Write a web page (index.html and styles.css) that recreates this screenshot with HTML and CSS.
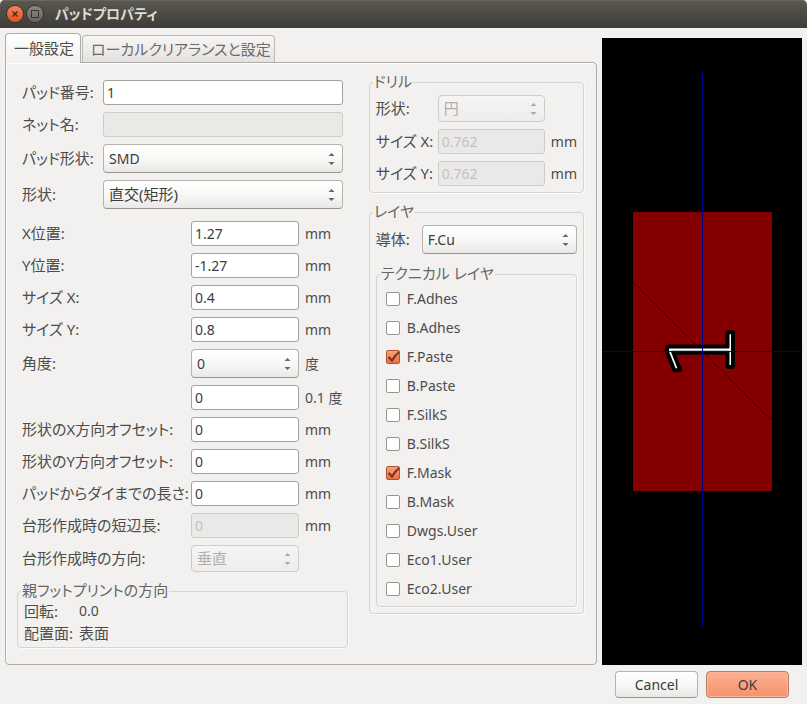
FILE: index.html
```html
<!DOCTYPE html>
<html lang="ja">
<head>
<meta charset="utf-8">
<title>パッドプロパティ</title>
<link rel="stylesheet" href="styles.css">
</head>
<body>
<header class="titlebar">
  <button class="win-btn win-close" type="button" aria-label="閉じる">
    <svg viewBox="0 0 16 16" width="16" height="16"><path d="M5.5 5.5l5 5M10.5 5.5l-5 5" fill="none" stroke="#4a2418" stroke-width="1.3"/></svg>
  </button>
  <button class="win-btn win-max" type="button" aria-label="最大化">
    <svg viewBox="0 0 16 16" width="16" height="16"><rect x="4.5" y="4.5" width="7" height="7" fill="none" stroke="#35342f" stroke-width="1"/></svg>
  </button>
  <h1 class="title">パッドプロパティ</h1>
</header>

<form class="dialog">
  <div class="main">
    <section class="notebook">
      <div class="tabs" role="tablist">
        <button class="tab tab-active" type="button" role="tab" aria-selected="true">一般設定</button>
        <button class="tab" type="button" role="tab" aria-selected="false">ローカルクリアランスと設定</button>
      </div>
      <div class="page" role="tabpanel">
        <div class="col-left">
          <div class="grid grid-wide">
            <label for="num">パッド番号:</label><input id="num" type="text" value="1">
            <label for="net">ネット名:</label><input id="net" type="text" disabled>
            <label for="type">パッド形状:</label><select id="type"><option>SMD</option></select>
            <label for="shape">形状:</label><select class="ja" id="shape"><option>直交(矩形)</option></select>
          </div>
          <div class="grid grid-values">
            <label for="px">X位置:</label><input id="px" type="text" value="1.27"><span>mm</span>
            <label for="py">Y位置:</label><input id="py" type="text" value="-1.27"><span>mm</span>
            <label for="sx">サイズ X:</label><input id="sx" type="text" value="0.4"><span>mm</span>
            <label for="sy">サイズ Y:</label><input id="sy" type="text" value="0.8"><span>mm</span>
            <label for="rot">角度:</label><select id="rot"><option>0</option></select><span>度</span>
            <i></i><input id="rot2" type="text" value="0" aria-label="角度 (0.1 度)"><span>0.1 度</span>
            <label for="ox">形状のX方向オフセット:</label><input id="ox" type="text" value="0"><span>mm</span>
            <label for="oy">形状のY方向オフセット:</label><input id="oy" type="text" value="0"><span>mm</span>
            <label for="die">パッドからダイまでの長さ:</label><input id="die" type="text" value="0"><span>mm</span>
            <label for="td">台形作成時の短辺長:</label><input id="td" type="text" value="0" disabled><span>mm</span>
            <label for="ta">台形作成時の方向:</label><select class="ja" id="ta" disabled><option>垂直</option></select><span></span>
          </div>
          <fieldset class="parent">
            <legend>親フットプリントの方向</legend>
            <dl>
              <dt>回転:</dt><dd>0.0</dd>
              <dt>配置面:</dt><dd class="ja">表面</dd>
            </dl>
          </fieldset>
        </div>

        <div class="col-right">
          <fieldset>
            <legend>ドリル</legend>
            <div class="grid grid-drill">
              <label for="ds">形状:</label><select class="ja" id="ds" disabled><option>円</option></select><span></span>
              <label for="dx">サイズ X:</label><input id="dx" type="text" value="0.762" disabled><span>mm</span>
              <label for="dy">サイズ Y:</label><input id="dy" type="text" value="0.762" disabled><span>mm</span>
            </div>
          </fieldset>
          <fieldset class="layers">
            <legend>レイヤ</legend>
            <div class="grid grid-copper">
              <label for="cu">導体:</label><select id="cu"><option>F.Cu</option></select>
            </div>
            <fieldset class="tech">
              <legend>テクニカル レイヤ</legend>
              <label class="check"><input type="checkbox">F.Adhes</label>
              <label class="check"><input type="checkbox">B.Adhes</label>
              <label class="check"><input type="checkbox" checked>F.Paste</label>
              <label class="check"><input type="checkbox">B.Paste</label>
              <label class="check"><input type="checkbox">F.SilkS</label>
              <label class="check"><input type="checkbox">B.SilkS</label>
              <label class="check"><input type="checkbox" checked>F.Mask</label>
              <label class="check"><input type="checkbox">B.Mask</label>
              <label class="check"><input type="checkbox">Dwgs.User</label>
              <label class="check"><input type="checkbox">Eco1.User</label>
              <label class="check"><input type="checkbox">Eco2.User</label>
            </fieldset>
          </fieldset>
        </div>
      </div>
    </section>

    <div class="preview">
      <svg viewBox="0 0 200 627" role="img" aria-label="パッドのプレビュー">
        <defs>
          <text id="pad-number" class="pad-number" transform="translate(130 313) rotate(-90)" text-anchor="middle">1</text>
        </defs>
        <rect x="31" y="174" width="139" height="279" fill="#840000"/>
        <path d="M31 244L169 382" stroke="#000084" stroke-width="1" shape-rendering="crispEdges"/>
        <use class="number-halo" href="#pad-number"/>
        <use class="number-core" href="#pad-number"/>
        <path d="M100 34h1v556h-1zM1 313h198v1H1z" fill="#000084"/>
      </svg>
    </div>
  </div>

  <footer class="actions">
    <button class="btn" type="button">Cancel</button>
    <button class="btn btn-ok" type="submit">OK</button>
  </footer>
</form>
</body>
</html>
```
FILE: styles.css
```css
* {
  box-sizing: border-box;
}

body {
  margin: 0;
  background: #f2f1f0;
  color: #4c4c4c;
  font: 14px/20px "Noto Sans", "Noto Sans CJK JP", sans-serif;
  font-feature-settings: "palt";
}

button,
input,
select {
  margin: 0;
  font: inherit;
  font-feature-settings: inherit;
  color: #3c3c3c;
}

/* Title bar */
.titlebar {
  display: flex;
  align-items: center;
  gap: 4px;
  height: 28px;
  padding: 0 7px;
  border-radius: 5px 5px 0 0;
  background: linear-gradient(#5a5850, #3d3c38);
  box-shadow: inset 0 1px #686660;
}

.win-btn {
  width: 16px;
  height: 16px;
  padding: 0;
  border: 0;
  border-radius: 50%;
  box-shadow: 0 0 0 1px #35342f;
}

.win-btn svg {
  display: block;
}

.win-close {
  background: linear-gradient(#f4835e, #e2521f);
}

.win-max {
  background: linear-gradient(#8a8880, #66645d);
}

.title {
  margin: 0 0 0 8px;
  color: #dfdbd2;
  font-size: 14px;
  font-weight: 700;
}

/* Dialog */
.dialog {
  padding: 5px 5px 6px;
}

.main {
  display: grid;
  grid-template-columns: 1fr 200px;
  gap: 5px;
}

.tabs {
  display: flex;
  align-items: flex-end;
  gap: 1px;
  height: 29px;
}

.tab {
  height: 27px;
  padding: 0 3px 1px 8px;
  border: 1px solid #bdbab6;
  border-bottom: 0;
  border-radius: 4px 4px 0 0;
  background: linear-gradient(#f7f6f5, #e4e2e0);
  color: #6a6a6a;
  font-size: 15px;
}

.tab-active {
  position: relative;
  height: 30px;
  margin-bottom: -1px;
  padding: 0 6px 1px 8px;
  border-color: #b0ada9;
  background: linear-gradient(#fff, #f2f1f0);
  color: #4c4c4c;
}

.page {
  display: flex;
  gap: 21px;
  padding: 9px 12px 16px 11px;
  border: 1px solid #b0ada9;
  border-radius: 0 4px 4px 4px;
  box-shadow: inset 1px 1px #fff;
}

.col-left {
  flex: 1;
  padding-top: 8px;
}

.col-right {
  flex: 0 0 215px;
}

/* Form rows */
.grid {
  display: grid;
  row-gap: 7px;
  align-items: center;
}

.grid label {
  padding-bottom: 2px;
  font-size: 15px;
  white-space: nowrap;
}

.grid span {
  padding-left: 6px;
  white-space: nowrap;
}

.grid-wide {
  grid-template-columns: 81px 1fr;
  padding: 0 5px;
}

.grid-values {
  grid-template-columns: 169px 108px 1fr;
  margin: 12px 0 9px;
  padding-left: 5px;
}

.grid-drill {
  grid-template-columns: 62px 107px 1fr;
}

.grid-copper {
  grid-template-columns: 46px 1fr;
}

input[type="text"] {
  width: 100%;
  height: 25px;
  padding: 0 3px;
  border: 1px solid #a5a29e;
  border-radius: 3px;
  background: #fff;
}

select {
  appearance: none;
  width: 100%;
  height: 29px;
  padding: 0 20px 0 5px;
  border: 1px solid #b6b3af;
  border-bottom-color: #98958f;
  border-radius: 4px;
  background:
    url("data:image/svg+xml,%3Csvg xmlns='http://www.w3.org/2000/svg' width='7' height='15'%3E%3Cpath d='M3.5 2L6.5 5h-6zM3.5 14L6.5 11h-6z' fill='%23666'/%3E%3C/svg%3E") no-repeat right 7px center,
    linear-gradient(#fff, #f8f8f7 50%, #e9e8e7);
}

input[type="text"]:disabled {
  border-color: #cfcdca;
  background: #eae9e8;
  color: #c4c2bf;
}

select:disabled {
  height: 27px;
  border-color: #cfcdca;
  background:
    url("data:image/svg+xml,%3Csvg xmlns='http://www.w3.org/2000/svg' width='7' height='15'%3E%3Cpath d='M3.5 2L6.5 5h-6zM3.5 14L6.5 11h-6z' fill='%23aaa'/%3E%3C/svg%3E") no-repeat right 7px center,
    linear-gradient(#f6f5f5, #eeedec);
  color: #b0aeab;
  opacity: 1;
}

.ja {
  font-size: 15px;
}

select.ja {
  padding-bottom: 2px;
}

/* Group boxes */
fieldset {
  min-width: 0;
  margin: 0;
  padding: 3px 6px 6px;
  border: 1px solid #d6d4d2;
  border-radius: 4px;
  box-shadow: 1px 1px #fbfbfa;
}

legend {
  height: 20px;
  margin-left: -3px;
  padding: 0 1px;
  color: #666;
  font-size: 15px;
  line-height: 18px;
}

.layers {
  margin-top: 9px;
}

.tech {
  margin-top: 10px;
  padding: 0 9px 3px;
}

.tech legend {
  margin-left: -6px;
}

.parent {
  padding: 0 6px 4px;
}

.parent dl {
  display: grid;
  grid-template-columns: 55px 1fr;
  row-gap: 2px;
  margin: 0;
}

.parent dt {
  font-size: 15px;
}

.parent dd {
  margin: 0;
}

/* Check boxes */
.check {
  display: flex;
  align-items: center;
  gap: 7px;
  height: 29px;
}

.check input {
  appearance: none;
  width: 14px;
  height: 14px;
  margin: 0;
  border: 1px solid #98958f;
  border-radius: 2px;
  background: #fff;
}

.check input:checked {
  border-color: #b5512f;
  background:
    url("data:image/svg+xml,%3Csvg xmlns='http://www.w3.org/2000/svg' width='14' height='14'%3E%3Cpath d='M2.5 7L6 10.5Q9 5 14 1.5' fill='none' stroke='%236b3522' stroke-width='2'/%3E%3C/svg%3E") no-repeat center / 14px 14px border-box,
    linear-gradient(#f9a07c, #ee6f41);
}

/* Pad preview */
.preview {
  margin-top: 5px;
  background: #000;
}

.preview svg {
  display: block;
  width: 100%;
}

.pad-number {
  font: 200 88px "DejaVu Sans Light", "DejaVu Sans", sans-serif;
}

.number-halo,
.number-core {
  stroke: #000;
  stroke-linejoin: round;
}

.number-halo {
  fill: #000;
  stroke-width: 6px;
}

.number-core {
  fill: #fff;
  stroke-width: 2px;
}

/* Dialog buttons */
.actions {
  display: flex;
  justify-content: flex-end;
  gap: 8px;
  margin-top: 6px;
  padding-right: 13px;
}

.btn {
  width: 83px;
  height: 27px;
  padding: 0;
  border: 1px solid #b6b3af;
  border-bottom-color: #98958f;
  border-radius: 4px;
  background: linear-gradient(#fff, #f8f8f7 50%, #e9e8e7);
}

.btn-ok {
  border-color: #b0806c;
  background: linear-gradient(#fdb092, #f6936c);
  box-shadow: inset 0 0 0 1px #fbb79d;
}
```
